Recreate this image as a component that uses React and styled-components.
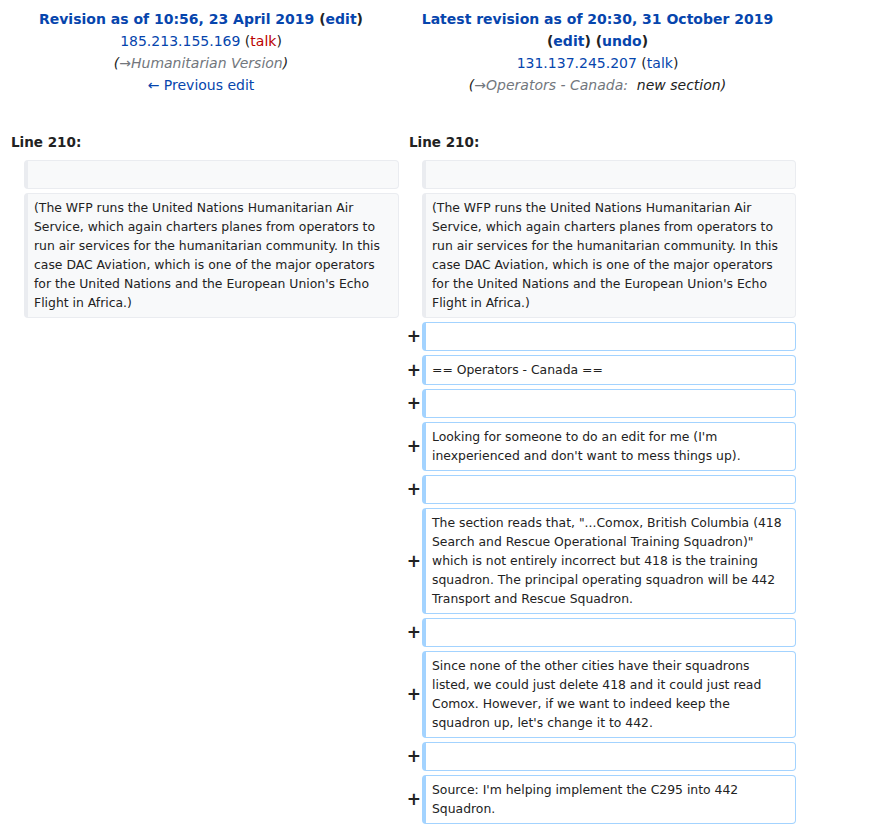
import React from "react";
import styled, { createGlobalStyle } from "styled-components";

const GlobalStyle = createGlobalStyle`
  html, body {
    margin: 0;
    padding: 0;
    background: #fff;
  }
  body {
    font-family: "DejaVu Sans", sans-serif;
    color: #222;
  }
`;

const Page = styled.div`
  padding: 8px 0 0 8px;
  width: 788px;
`;

const Diff = styled.div`
  display: grid;
  grid-template-columns: 16px 375px 23px 374px;
  row-gap: 4px;
  align-items: center;
`;

const Title = styled.div`
  grid-column: ${(p) => (p.$side === "left" ? "1 / 3" : "3 / 5")};
  padding-right: ${(p) => (p.$side === "left" ? "5px" : "0")};
  align-self: start;
  text-align: center;
  font-size: 14px;
  line-height: 22px;
`;

const TitleHead = styled.div`
  font-weight: bold;
`;

const A = styled.span`
  color: ${(p) => (p.$red ? "#ba0000" : "#0645ad")};
`;

const Comment = styled.div`
  font-style: italic;
`;

const Auto = styled.span`
  color: #72777d;
`;

const Spacer = styled.div`
  grid-column: 1 / 5;
  height: 27px;
`;

const LineNo = styled.div`
  grid-column: ${(p) => (p.$side === "left" ? "1 / 3" : "3 / 5")};
  padding-left: ${(p) => (p.$side === "left" ? "3px" : "10px")};
  font-weight: bold;
  font-size: 13.5px;
  line-height: 22px;
  margin-bottom: 2.5px;
`;

const Marker = styled.div`
  grid-column: ${(p) => (p.$side === "left" ? 1 : 3)};
  text-align: right;
  padding-right: 1px;
  font-weight: bold;
  font-size: 17px;
  line-height: 20px;
`;

const Cell = styled.div`
  grid-column: ${(p) => (p.$side === "left" ? 2 : 4)};
  font-size: 12.4px;
  line-height: 19px;
  padding: 4px 8px 4.5px 6px;
  border-style: solid;
  border-width: 1px 1px 1px 4px;
  border-radius: 4px;
  border-color: ${(p) => (p.$added ? "#a3d3ff" : "#eaecf0")};
  background: ${(p) => (p.$added ? "#fff" : "#f8f9fa")};
  color: #222;
  white-space: pre-wrap;
`;

const contextText =
  "(The WFP runs the United Nations Humanitarian Air Service, which again charters planes from operators to run air services for the humanitarian community. In this case DAC Aviation, which is one of the major operators for the United Nations and the European Union's Echo Flight in Africa.)";

const added = [
  "",
  "== Operators - Canada ==",
  "",
  "Looking for someone to do an edit for me (I'm inexperienced and don't want to mess things up).",
  "",
  'The section reads that, "...Comox, British Columbia (418 Search and Rescue Operational Training Squadron)" which is not entirely incorrect but 418 is the training squadron. The principal operating squadron will be 442 Transport and Rescue Squadron.',
  "",
  "Since none of the other cities have their squadrons listed, we could just delete 418 and it could just read Comox. However, if we want to indeed keep the squadron up, let's change it to 442.",
  "",
  "Source: I'm helping implement the C295 into 442 Squadron.",
];

function App() {
  return (
    <>
      <GlobalStyle />
      <Page>
        <Diff>
          <Title $side="left">
            <TitleHead>
              <A>Revision as of 10:56, 23 April 2019</A> (<A>edit</A>)
            </TitleHead>
            <div>
              <A>185.213.155.169</A> (<A $red>talk</A>)
            </div>
            <Comment>
              (<Auto>→Humanitarian Version</Auto>)
            </Comment>
            <div>
              <A>← Previous edit</A>
            </div>
          </Title>
          <Title $side="right">
            <TitleHead>
              <A>Latest revision as of 20:30, 31 October 2019</A>
            </TitleHead>
            <TitleHead>
              (<A>edit</A>) (<A>undo</A>)
            </TitleHead>
            <div>
              <A>131.137.245.207</A> (<A>talk</A>)
            </div>
            <Comment>
              (<Auto>→Operators - Canada:</Auto> &nbsp;new section)
            </Comment>
          </Title>

          <Spacer />

          <LineNo $side="left">Line 210:</LineNo>
          <LineNo $side="right">Line 210:</LineNo>

          <Cell $side="left"><br /></Cell>
          <Cell $side="right"><br /></Cell>

          <Cell $side="left">{contextText}</Cell>
          <Cell $side="right">{contextText}</Cell>

          {added.map((text, i) => (
            <React.Fragment key={i}>
              <Marker $side="right">+</Marker>
              <Cell $side="right" $added>
                {text === "" ? <br /> : text}
              </Cell>
            </React.Fragment>
          ))}
        </Diff>
      </Page>
    </>
  );
}

export default App;
